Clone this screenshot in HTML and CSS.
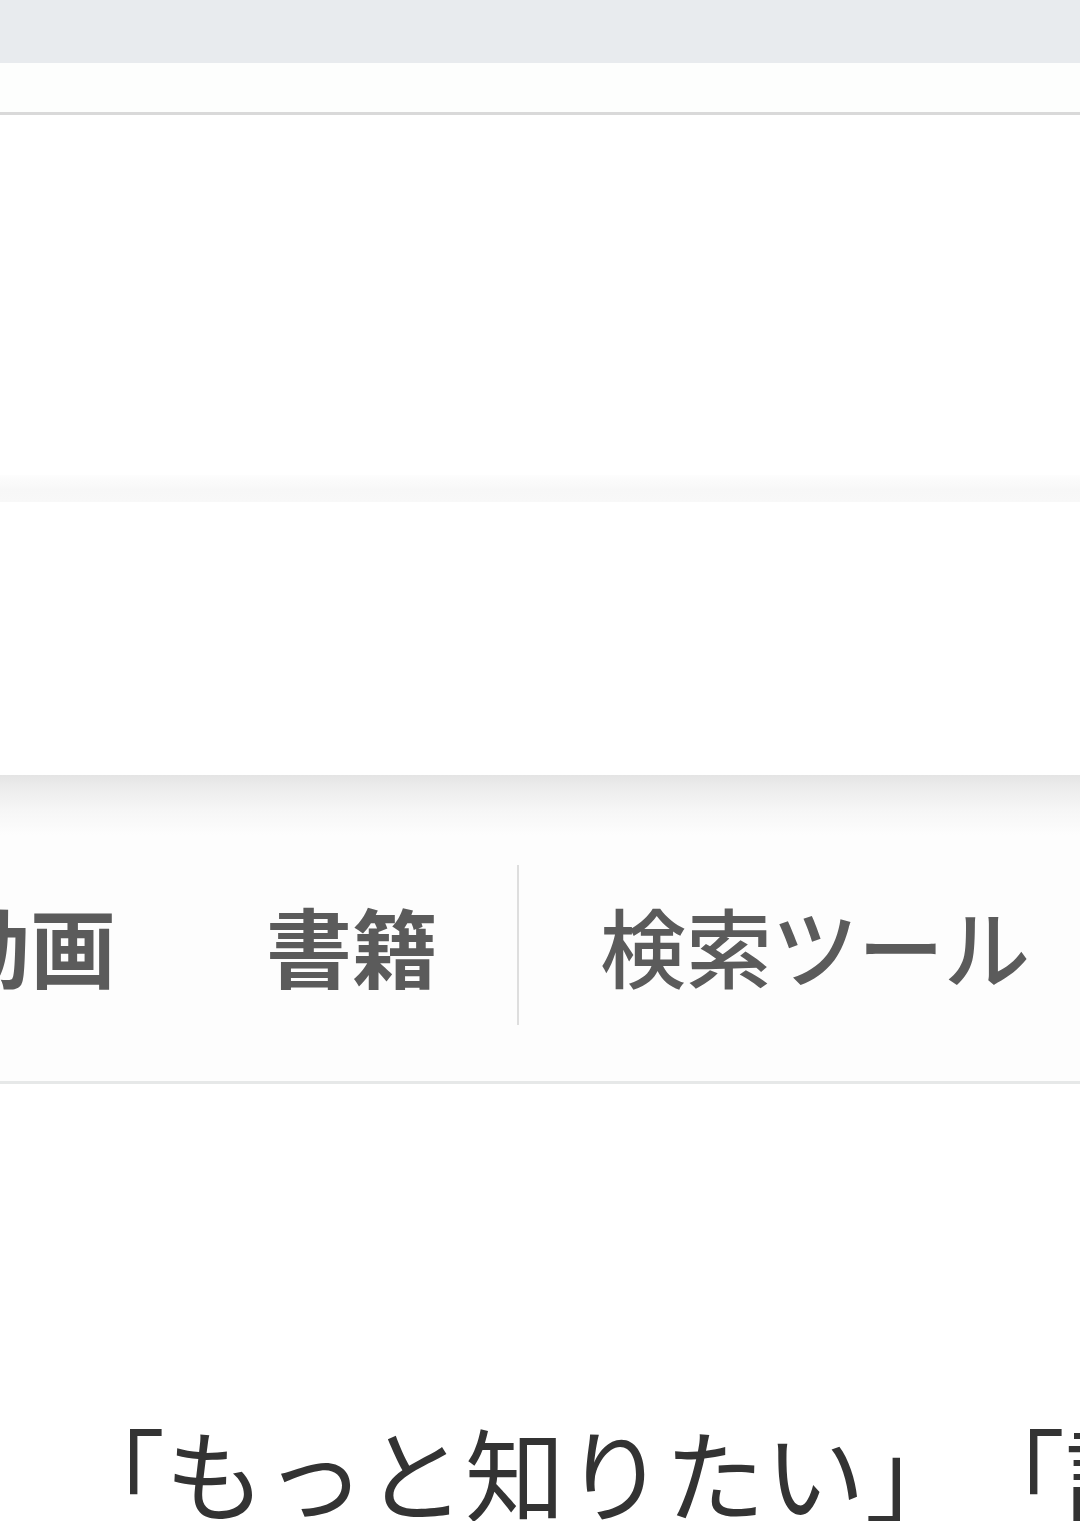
FILE: index.html
```html
<!DOCTYPE html>
<html lang="ja">
<head>
<meta charset="utf-8">
<title>検索</title>
<link rel="stylesheet" href="styles.css">
</head>
<body>
<div class="page">
  <div class="statusbar"></div>
  <div class="searchbar"></div>
  <div class="results-top"></div>
  <div class="band"></div>
  <div class="gap"></div>
  <nav class="tabs">
    <div class="tablist">
      <span class="tab tab-strong">動画</span>
      <span class="tab tab-strong">書籍</span>
      <span class="divider"></span>
      <span class="tab tab-tools">検索ツール</span>
    </div>
  </nav>
  <main class="content">
    <p class="lead"><span class="quote">「もっと知りたい」</span><span class="quote quote-next">「詳しく知りたい」</span></p>
  </main>
</div>
</body>
</html>
```

FILE: styles.css
```css
html, body {
  margin: 0;
  padding: 0;
  background: #ffffff;
}
body {
  width: 1080px;
  height: 1527px;
  overflow: hidden;
  font-family: "Noto Sans CJK JP", "Noto Sans", sans-serif;
}
.page {
  display: flex;
  flex-direction: column;
  width: 1080px;
  overflow: hidden;
}
.statusbar {
  height: 63px;
  background: #e8ebee;
}
.searchbar {
  height: 49px;
  background: #fdfefd;
  border-bottom: 3px solid #d9d9d9;
  box-shadow: 0 2px 3px rgba(0,0,0,0.06);
}
.results-top {
  height: 360px;
  background: #ffffff;
}
.band {
  height: 27px;
  background: linear-gradient(#fdfdfd, #f7f7f7 55%, #f8f8f8);
}
.gap {
  height: 273px;
  background: #ffffff;
}
.tabs {
  background: linear-gradient(#e4e4e4 0px, #ececec 12px, #f6f6f6 35px, #fdfdfd 60px, #fdfdfd 100%);
  padding-top: 90px;
  padding-bottom: 56px;
  border-bottom: 3px solid #e6e8e8;
  overflow: hidden;
}
.tablist {
  display: flex;
  align-items: center;
  margin-left: -56px;
  white-space: nowrap;
}
.tab {
  font-size: 86px;
  line-height: 86px;
  color: #5b5b5b;
}
.tab-strong {
  font-weight: 700;
  margin-right: 150px;
}
.tab-strong + .tab-strong {
  margin-right: 79px;
}
.divider {
  width: 2px;
  height: 160px;
  background: #dedede;
  margin-right: 81px;
}
.tab-tools {
  font-weight: 500;
}
.content {
  padding-top: 337px;
  overflow: hidden;
}
.lead {
  margin: 0;
  padding-left: 65px;
  font-size: 100px;
  line-height: 100px;
  color: #333333;
  white-space: nowrap;
  display: flex;
}
.quote {
  flex: none;
}
.quote-next {
  margin-left: 0;
}
```
